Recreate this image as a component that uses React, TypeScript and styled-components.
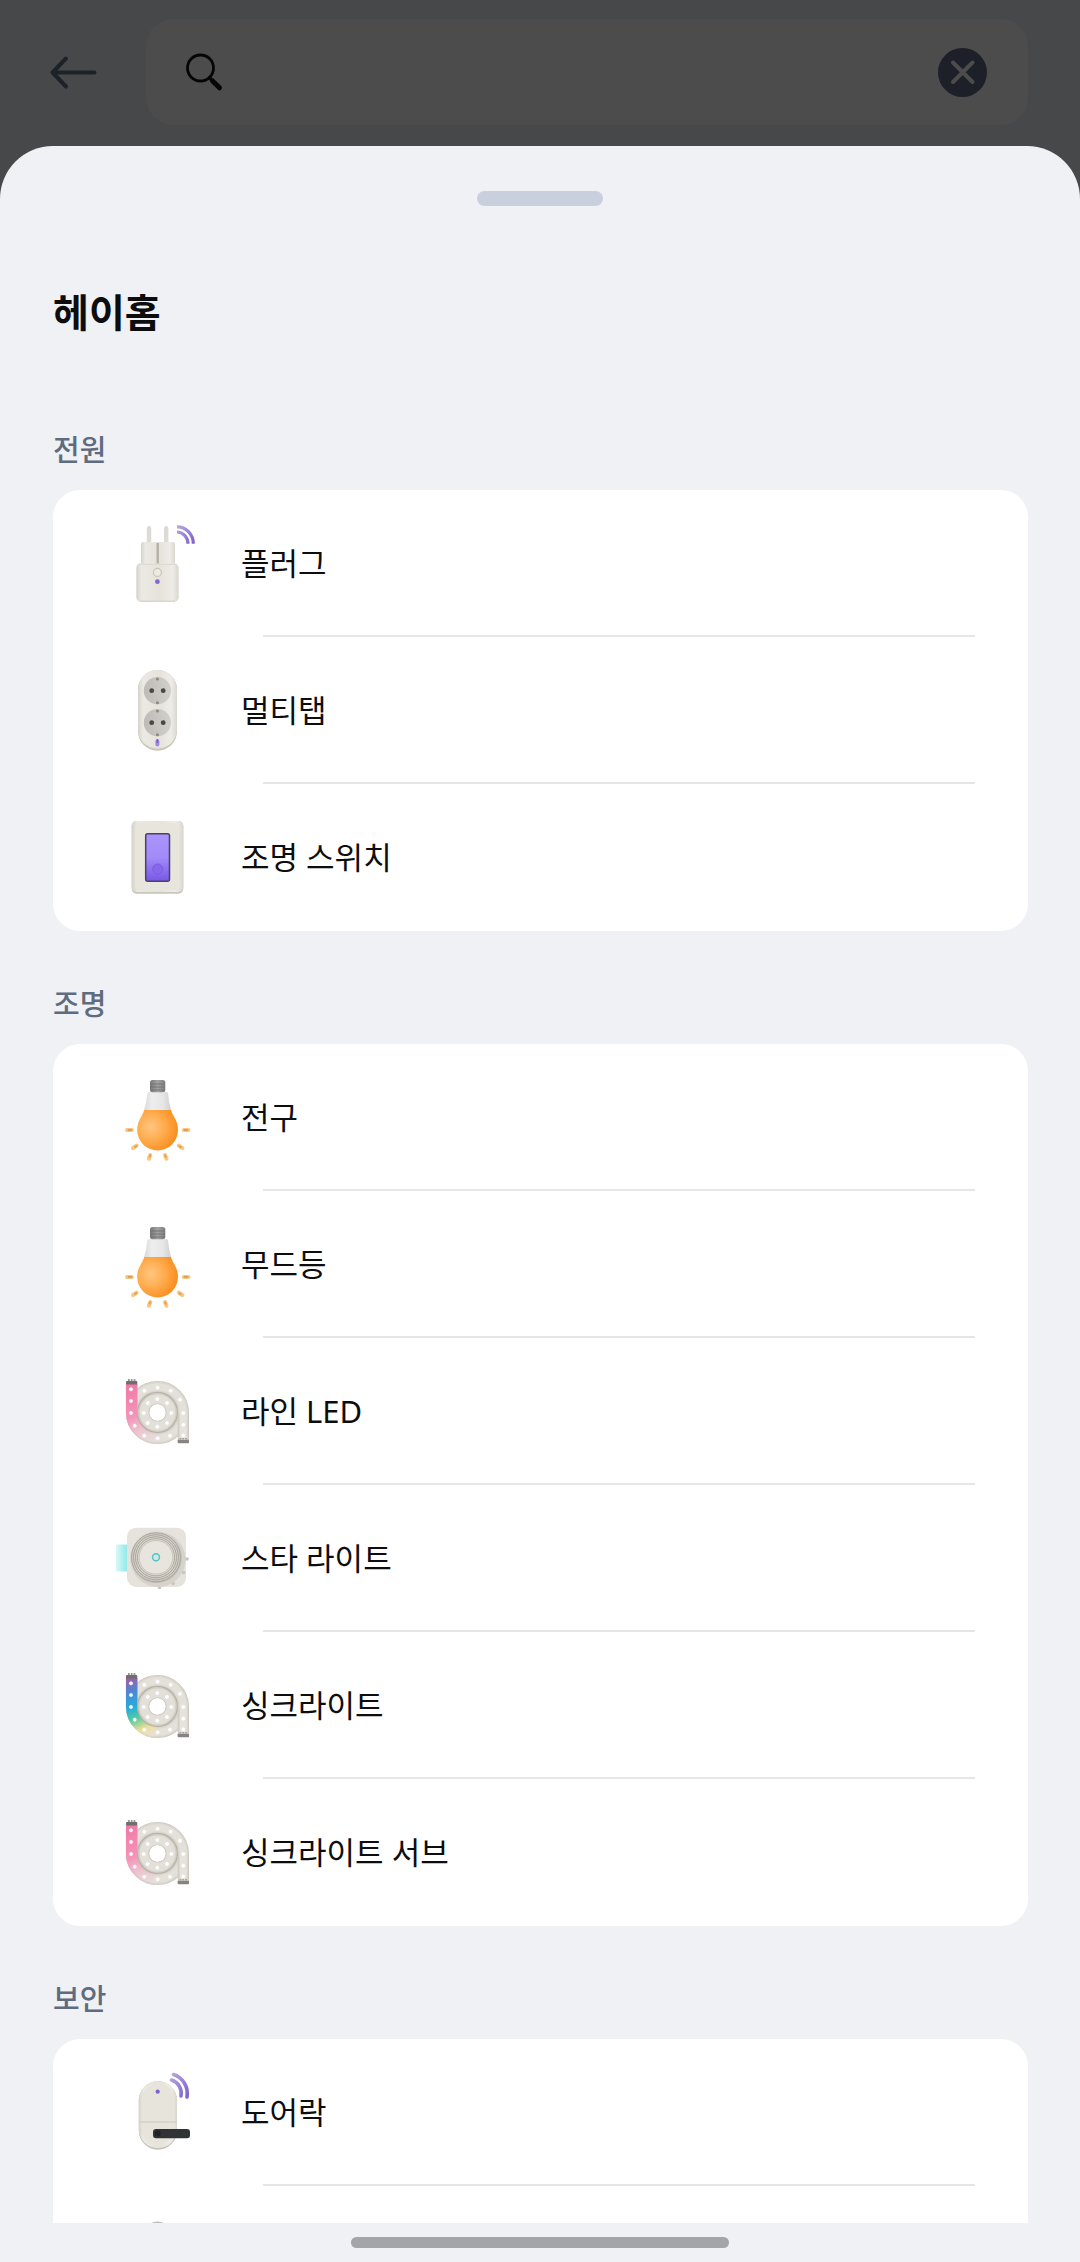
import React from "react";
import styled, { createGlobalStyle } from "styled-components";

const GlobalStyle = createGlobalStyle`
  * { box-sizing: border-box; }
  body {
    margin: 0;
    background: #eff1f5;
    color: #0d0d0f;
    font-family: "Noto Sans", "Noto Sans CJK KR", sans-serif;
  }
`;

const Screen = styled.div`
  height: 100vh;
  display: flex;
  flex-direction: column;
  overflow: hidden;
  background: #47484a;
`;

const TopBar = styled.header`
  flex: none;
  display: flex;
  align-items: center;
  gap: 46px;
  padding: 19px 52px 21px 48px;
`;

const IconButton = styled.button`
  flex: none;
  display: flex;
  padding: 0;
  border: 0;
  background: none;
`;

const SearchBox = styled.div`
  flex: 1;
  display: flex;
  align-items: center;
  gap: 20px;
  height: 106px;
  padding: 0 41px 0 38px;
  border-radius: 27px;
  background: #4c4c4c;
`;

const SearchInput = styled.input`
  flex: 1;
  min-width: 0;
  height: 60px;
  border: 0;
  outline: 0;
  background: transparent;
  color: #000;
  font: inherit;
  font-size: 31px;
`;

const Sheet = styled.main`
  flex: 1;
  min-height: 0;
  display: flex;
  flex-direction: column;
  border-radius: 53px 53px 0 0;
  background: #eff1f5;
`;

const Grabber = styled.div`
  flex: none;
  width: 126px;
  height: 15px;
  margin: 45px auto 0;
  border-radius: 8px;
  background: #cacfdd;
`;

const SheetBody = styled.div`
  flex: 1;
  min-height: 0;
  overflow: hidden;
  padding: 78px 52px 0 53px;
`;

const Title = styled.h1`
  margin: 0 0 88px;
  font-size: 39px;
  line-height: 56px;
  font-weight: 700;
`;

const Section = styled.section`
  & + & {
    margin-top: 51px;
  }
`;

const SectionTitle = styled.h2`
  margin: 0 0 18px;
  color: #5f6b7e;
  font-size: 29px;
  line-height: 44px;
  font-weight: 500;
`;

const Card = styled.ul`
  margin: 0;
  padding: 0;
  list-style: none;
  border-radius: 27px;
  background: #fff;
`;

const Divider = styled.div`
  height: 2px;
  margin: 0 53px 0 210px;
  background: #e6e6e7;
`;

const Item = styled.li`
  &:last-child ${Divider} {
    background: transparent;
  }
`;

const DeviceButton = styled.button`
  display: flex;
  align-items: center;
  gap: 41px;
  width: 100%;
  height: 145px;
  padding: 0 60px;
  border: 0;
  background: none;
  color: inherit;
  font: inherit;
  font-size: 31px;
  line-height: 44px;
  text-align: left;
`;

const DeviceIcon = styled.svg`
  flex: none;
  width: 87px;
  height: 87px;
  overflow: visible;
`;

const NavArea = styled.footer`
  flex: none;
  display: flex;
  justify-content: center;
  padding: 14px 0;
`;

const HomeIndicator = styled.div`
  width: 35%;
  height: 11px;
  border-radius: 6px;
  background: #a4a5a8;
`;

const GradientDefs = styled.svg`
  position: absolute;
  width: 0;
  height: 0;
`;

const Gradients = () => (
  <GradientDefs aria-hidden="true">
    <defs>
      <linearGradient id="shell">
        <stop offset="0" stopColor="#d6d2ca" />
        <stop offset="0.12" stopColor="#ebe9e3" />
        <stop offset="0.55" stopColor="#e6e3db" />
        <stop offset="0.85" stopColor="#eeece7" />
        <stop offset="1" stopColor="#dad7cf" />
      </linearGradient>
      <linearGradient id="wave" x1="0" y1="0" x2="1" y2="1">
        <stop offset="0" stopColor="#b7a5dc" />
        <stop offset="1" stopColor="#7d62cd" />
      </linearGradient>
      <linearGradient id="socket" x1="0" y1="0" x2="1" y2="0">
        <stop offset="0" stopColor="#bebbb6" />
        <stop offset="1" stopColor="#d2d0ca" />
      </linearGradient>
      <linearGradient id="rocker" x1="0" y1="0" x2="0" y2="1">
        <stop offset="0" stopColor="#ab94fb" />
        <stop offset="0.5" stopColor="#a38bf8" />
        <stop offset="1" stopColor="#7657e6" />
      </linearGradient>
      <linearGradient id="cap">
        <stop offset="0" stopColor="#777" />
        <stop offset="0.5" stopColor="#a3a3a3" />
        <stop offset="1" stopColor="#7d7d7d" />
      </linearGradient>
      <linearGradient id="neck">
        <stop offset="0" stopColor="#d8d8d8" />
        <stop offset="0.3" stopColor="#eeeeee" />
        <stop offset="0.7" stopColor="#e6e6e6" />
        <stop offset="1" stopColor="#d0d0d0" />
      </linearGradient>
      <radialGradient id="glow" gradientUnits="userSpaceOnUse" cx="38" cy="54" r="28">
        <stop offset="0" stopColor="#ffc680" />
        <stop offset="0.4" stopColor="#ffb157" />
        <stop offset="0.8" stopColor="#fc982e" />
        <stop offset="1" stopColor="#f68d20" />
      </radialGradient>
      <linearGradient id="pink" gradientUnits="userSpaceOnUse" x1="14" y1="16" x2="40" y2="78">
        <stop offset="0" stopColor="#f277a6" />
        <stop offset="0.5" stopColor="#f494b8" />
        <stop offset="1" stopColor="#f3c8d5" stopOpacity="0" />
      </linearGradient>
      <linearGradient id="rainbow" gradientUnits="userSpaceOnUse" x1="14" y1="16" x2="40" y2="78">
        <stop offset="0" stopColor="#b0559f" />
        <stop offset="0.22" stopColor="#4e86d2" />
        <stop offset="0.45" stopColor="#21aede" />
        <stop offset="0.62" stopColor="#5acb9c" />
        <stop offset="0.8" stopColor="#ebdf98" />
        <stop offset="1" stopColor="#ece3c6" stopOpacity="0" />
      </linearGradient>
      <linearGradient id="beam">
        <stop offset="0" stopColor="#d9f8f8" />
        <stop offset="1" stopColor="#8ce8e6" />
      </linearGradient>
      <linearGradient id="lens" x1="0" y1="0" x2="1" y2="1">
        <stop offset="0" stopColor="#e6e3dc" />
        <stop offset="1" stopColor="#bdb9b1" />
      </linearGradient>
    </defs>
  </GradientDefs>
);

const PlugArt = () => (
  <>
    <rect x="33.8" y="7" width="4.4" height="20" rx="2.2" fill="#dddbd6" />
    <rect x="51" y="7" width="4.4" height="20" rx="2.2" fill="#dddbd6" />
    <rect x="28" y="23" width="34" height="25" rx="2" fill="url(#shell)" />
    <rect x="43.5" y="24" width="2.4" height="21" fill="#b5b1a8" />
    <rect x="23.3" y="44.5" width="42.4" height="38.3" rx="4.5" fill="url(#shell)" />
    <path d="M25 45.3h39" stroke="#dcd9d1" strokeWidth="1" />
    <path d="M27 82.2h35" stroke="#cfcbc2" strokeWidth="1" />
    <circle cx="44.4" cy="53.4" r="4" fill="#eceae4" stroke="#cbc4b6" strokeWidth="1.2" />
    <circle cx="44.4" cy="62.7" r="2.4" fill="#8467d2" />
    <path d="M64 7.8A16 17 0 0 1 80.3 24.7M64 13A11 12 0 0 1 75 24.7" fill="none" stroke="url(#wave)" strokeWidth="3.2" />
  </>
);

const Socket = ({ cy }: { cy: number }) => (
  <>
    <circle cx="44.4" cy={cy} r="13.6" fill="url(#socket)" />
    <circle cx="38.7" cy={cy} r="2.4" fill="#4b4745" />
    <circle cx="50.2" cy={cy} r="2.4" fill="#4b4745" />
    <circle cx="44.4" cy={cy - 11.6} r="1.5" fill="#8b8882" />
    <circle cx="44.4" cy={cy + 12} r="1.5" fill="#8b8882" />
  </>
);

const StripArt = () => (
  <>
    <rect x="25" y="4" width="39" height="80.7" rx="19.5" fill="#c9c5bb" />
    <rect x="25" y="4" width="39" height="78.8" rx="19.5" fill="url(#shell)" />
    <Socket cy={24.7} />
    <Socket cy={56.7} />
    <rect x="42.4" y="73.5" width="4" height="7" rx="2" fill="#a08ae8" />
    <path d="M44.4 73v4" stroke="#7757d2" strokeWidth="1.6" />
  </>
);

const SwitchArt = () => (
  <>
    <rect x="18.7" y="8" width="51.6" height="72.7" rx="5" fill="#c9c6bb" />
    <rect x="18.7" y="8" width="51.6" height="71" rx="5" fill="url(#shell)" />
    <rect x="22" y="10" width="45" height="67" rx="4" fill="#e7e5dc" />
    <rect x="32.7" y="20.7" width="23.8" height="47.6" rx="2" fill="url(#rocker)" stroke="#4c3f70" strokeWidth="1.5" />
    <circle cx="44.7" cy="56" r="5" fill="#8668ea" stroke="#7758df" strokeWidth="0.8" />
  </>
);

const BulbArt = () => (
  <>
    <path d="M36 19H53.500Q55 19 55.200 21Q55.500 29 58.200 37.500H31Q33.800 29 34.200 21Q34.400 19 36 19Z" fill="url(#neck)" />
    <rect x="37" y="7" width="15.300" height="12.300" rx="2.500" fill="url(#cap)" />
    <path d="M37.500 11h14.500M37.500 14h14.500M37.500 17h14.500" stroke="#6d6d6d" strokeWidth="0.800" />
    <path d="M31.200 37H58C60 44 65 47.500 65 57A20.400 20.400 0 0 1 24.200 57C24.200 47.500 29.200 44 31.200 37Z" fill="url(#glow)" />
    <path
      d="M14 57h4.800M70.800 57h4.600M20 75.200l3.600-2.600M65.800 72.600l3.600 2.600M35.800 85.800l1.500-3.800M52 82l1.500 3.800"
      stroke="#fcc67e"
      strokeWidth="4"
      strokeLinecap="round"
    />
    <path d="M15.500 57h3M71.500 57h3M22 74l1.500-1M66.500 73.200l1.500 1M36.600 83.600l.6-1.400M52.200 82.400l.6 1.400" stroke="#dea055" strokeWidth="1.800" strokeLinecap="round" />
  </>
);

const OUTER_DOTS = [
  [18, 22.3], [18, 34], [18, 46], [21.7, 58.7], [31.3, 68.7], [44.6, 71.3], [57, 68.7],
  [31.3, 23.7], [44.6, 20.7], [57.7, 23.7], [67, 32.7], [70.3, 46], [70.3, 57.7], [70.3, 68.4],
];
const INNER_DOTS = [
  [44.3, 32], [54, 36], [58.3, 46], [54, 56], [44.3, 59.7], [34.7, 56], [30.7, 46], [34.7, 36],
];

const StripLight = ({ paint }: { paint: string }) => (
  <>
    <g fill="none" stroke="#cdc9c0" strokeWidth="11.5">
      <circle cx="44.5" cy="45.5" r="25.8" />
    </g>
    <g fill="none" stroke="#dad7ce" strokeWidth="9.8">
      <circle cx="44.5" cy="45.5" r="25.8" />
    </g>
    <circle cx="44.5" cy="45.5" r="25.8" fill="none" stroke="#e4e1da" strokeWidth="7" />
    <path d="M64.7 47H76V74H64.7Z" fill="#cdc9c0" />
    <path d="M65.6 45.5H75.1V74H65.6Z" fill="#dad7ce" />
    <path d="M67 44H73.800V73H67Z" fill="#e6e3dc" />
    <path d="M18.7 17V45.5A25.8 25.8 0 0 0 44.5 71.3" fill="none" stroke="#d6d2ca" strokeWidth="11.5" />
    <path d="M18.7 17V45.5A25.8 25.8 0 0 0 44.5 71.3" fill="none" stroke="#e4e1da" strokeWidth="8.6" />
    <path d="M18.7 17V45.5A25.8 25.8 0 0 0 44.5 71.3" fill="none" stroke={`url(#${paint})`} strokeWidth="11.5" />
    <circle cx="44.5" cy="45.5" r="14.4" fill="none" stroke="#b3afa6" strokeWidth="12" />
    <circle cx="44.5" cy="45.5" r="13.9" fill="none" stroke="#d2cec5" strokeWidth="11" />
    <circle cx="44.5" cy="45.5" r="13.6" fill="none" stroke="#e3e0d9" strokeWidth="8.600" />
    <rect x="13" y="14" width="11.300" height="3.600" rx="1" fill="#716c6d" />
    <path d="M15 13h7.5" stroke="#999" strokeWidth="2" strokeDasharray="1.8 1" />
    <rect x="64.7" y="72.7" width="11.300" height="3.600" rx="0.8" fill="#868380" />
    <path d="M66.5 71.8h8" stroke="#a5a29d" strokeWidth="1.6" strokeDasharray="1.8 1" />
    {[...OUTER_DOTS, ...INNER_DOTS].map(([cx, cy], i) => (
      <circle key={i} cx={cx} cy={cy} r="1.700" fill="#fff" stroke="#fff" strokeOpacity="0.400" strokeWidth="1" />
    ))}
  </>
);

const PinkStripArt = () => <StripLight paint="pink" />;
const RainbowStripArt = () => <StripLight paint="rainbow" />;

const StarArt = () => (
  <>
    <rect x="3" y="30.5" width="12" height="27" rx="1" fill="url(#beam)" />
    <rect x="14" y="13.7" width="59" height="59.3" rx="9" fill="#e6e3dc" />
    <g fill="#c9c5bd">
      <circle cx="74" cy="45" r="1.8" />
      <circle cx="70.5" cy="58.5" r="1.8" />
      <circle cx="60" cy="69.5" r="1.8" />
      <circle cx="46.5" cy="73.5" r="1.8" />
    </g>
    <circle cx="45" cy="45.5" r="27.500" fill="#d6d3cb" />
    <circle cx="43" cy="43.300" r="26" fill="url(#lens)" />
    <circle cx="43" cy="43.300" r="24.500" fill="#d0ccc4" stroke="#a39f97" strokeWidth="0.900" />
    <circle cx="43" cy="43.300" r="22.500" fill="#d4d1c9" stroke="#a39f97" strokeWidth="0.900" />
    <circle cx="43" cy="43.300" r="20.500" fill="#d8d5cd" stroke="#a39f97" strokeWidth="0.900" />
    <circle cx="43" cy="43.300" r="18.600" fill="#dcd9d1" stroke="#aaa69e" strokeWidth="0.900" />
    <circle cx="43" cy="43.300" r="16.800" fill="#e8e5de" stroke="#b9b5ad" strokeWidth="0.600" />
    <circle cx="43" cy="43.300" r="3.500" fill="#d5e6e1" stroke="#4cc4c4" strokeWidth="1.400" />
  </>
);

const LockArt = () => (
  <>
    <rect x="25.8" y="13.3" width="38.2" height="68.4" rx="19.1" fill="#c2beb5" />
    <rect x="25.8" y="13.3" width="38.2" height="67" rx="19.1" fill="url(#shell)" />
    <rect x="28.5" y="16" width="33" height="60" rx="16.5" fill="#e7e4dc" />
    <path d="M26 54h38" stroke="#cbc7be" strokeWidth="1.2" />
    <circle cx="44.7" cy="23.7" r="2.1" fill="#7f63ca" />
    <rect x="40" y="61" width="37" height="9.300" rx="3" fill="#303334" />
    <circle cx="44.7" cy="65.5" r="3" fill="#202324" />
    <path d="M60.5 6.5A20 20 0 0 1 74 29M58.500 12A14 14 0 0 1 68 28" fill="none" stroke="url(#wave)" strokeWidth="3.600" strokeLinecap="round" />
  </>
);

const RoundDeviceArt = () => (
  <>
    <circle cx="44.5" cy="20.5" r="14" fill="#bfbcb5" />
    <circle cx="44.5" cy="22" r="13" fill="#e6e3da" />
  </>
);

type Device = { name?: string; Art: React.ComponentType };

const GROUPS: { title: string; devices: Device[] }[] = [
  {
    title: "전원",
    devices: [
      { name: "플러그", Art: PlugArt },
      { name: "멀티탭", Art: StripArt },
      { name: "조명 스위치", Art: SwitchArt },
    ],
  },
  {
    title: "조명",
    devices: [
      { name: "전구", Art: BulbArt },
      { name: "무드등", Art: BulbArt },
      { name: "라인 LED", Art: PinkStripArt },
      { name: "스타 라이트", Art: StarArt },
      { name: "싱크라이트", Art: RainbowStripArt },
      { name: "싱크라이트 서브", Art: PinkStripArt },
    ],
  },
  {
    title: "보안",
    devices: [{ name: "도어락", Art: LockArt }, { Art: RoundDeviceArt }],
  },
];

export default function App() {
  return (
    <>
      <GlobalStyle />
      <Gradients />
      <Screen>
        <TopBar>
          <IconButton type="button" aria-label="뒤로">
            <svg width="52" height="52" viewBox="0 0 52 52" fill="none" stroke="#1d2229" strokeWidth="4" strokeLinecap="round" strokeLinejoin="round">
              <path d="M46.5 26.5H4.5M18 12.5L4.5 26.5L18 40.5" />
            </svg>
          </IconButton>
          <SearchBox>
            <svg width="42" height="42" viewBox="0 0 42 42" fill="none" stroke="#050505" strokeLinecap="round" aria-hidden="true">
              <circle cx="16.5" cy="17" r="13" strokeWidth="2.8" />
              <path d="M25.500 26.500L28 29.500" strokeWidth="3.400" />
              <path d="M28.500 30L35.500 36.800" strokeWidth="5" />
            </svg>
            <SearchInput type="text" aria-label="검색" />
            <IconButton type="button" aria-label="지우기">
              <svg width="49" height="49" viewBox="0 0 49 49">
                <circle cx="24.5" cy="24.5" r="24.5" fill="#1d2028" />
                <path d="M15 14.500L34.500 34M34.500 14.500L15 34" stroke="#4c4c4c" strokeWidth="4" strokeLinecap="round" />
              </svg>
            </IconButton>
          </SearchBox>
        </TopBar>
        <Sheet>
          <Grabber />
          <SheetBody>
            <Title>헤이홈</Title>
            {GROUPS.map((group) => (
              <Section key={group.title}>
                <SectionTitle>{group.title}</SectionTitle>
                <Card>
                  {group.devices.map(({ name, Art }, i) => (
                    <Item key={i}>
                      <DeviceButton type="button">
                        <DeviceIcon viewBox="0 0 87 87" aria-hidden="true">
                          <Art />
                        </DeviceIcon>
                        {name && <span>{name}</span>}
                      </DeviceButton>
                      <Divider />
                    </Item>
                  ))}
                </Card>
              </Section>
            ))}
          </SheetBody>
          <NavArea>
            <HomeIndicator />
          </NavArea>
        </Sheet>
      </Screen>
    </>
  );
}
